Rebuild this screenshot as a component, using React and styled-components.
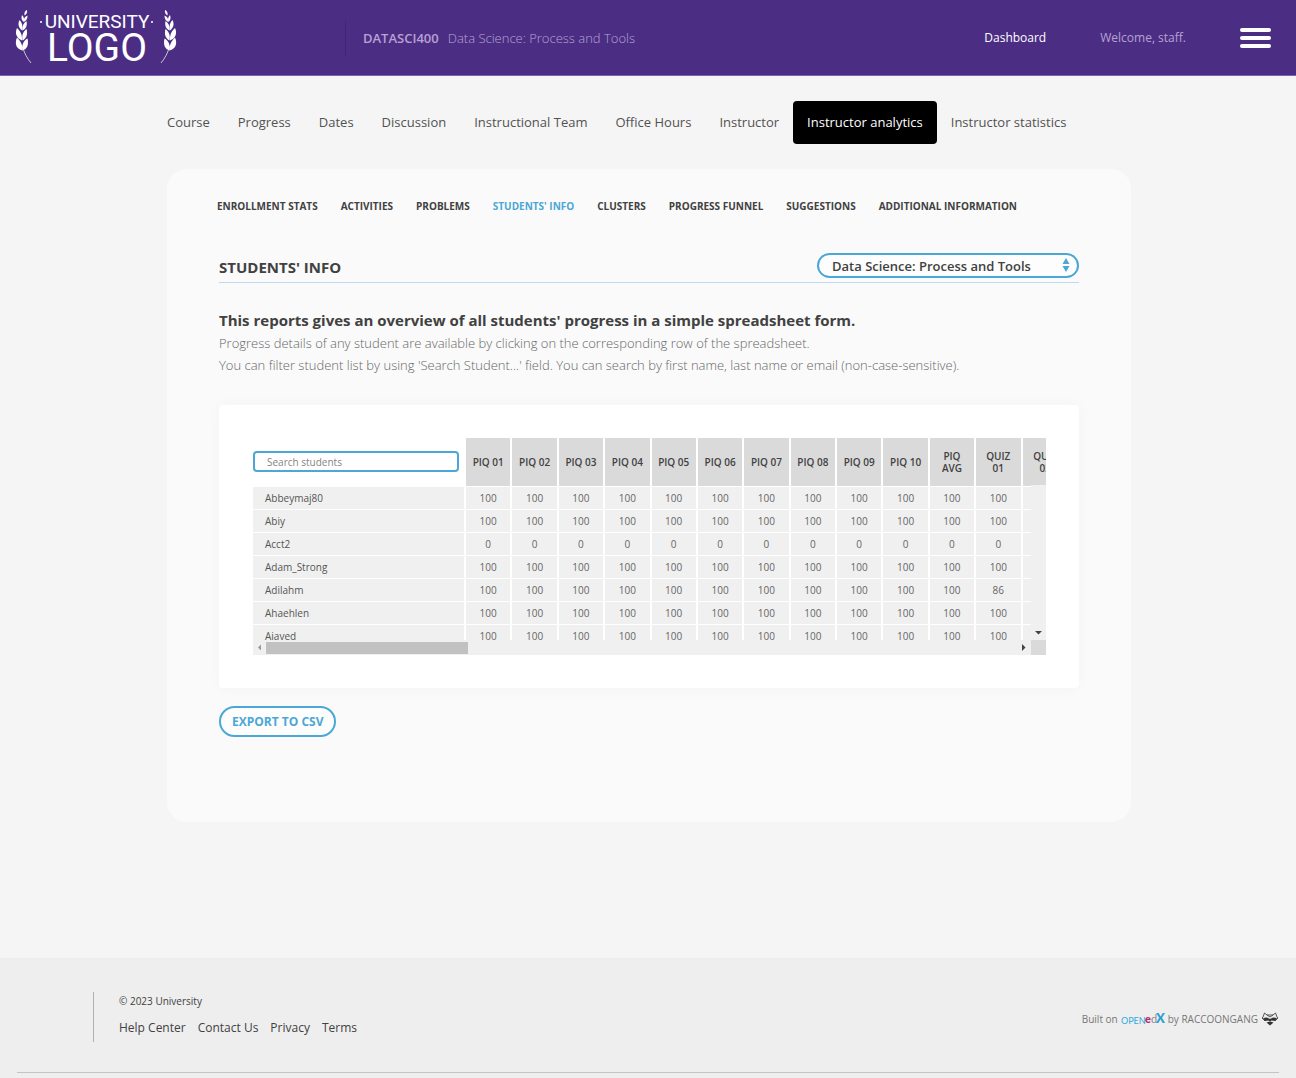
import React, { useState } from "react";
import styled, { createGlobalStyle } from "styled-components";

const GlobalStyle = createGlobalStyle`
  *, *::before, *::after {
    box-sizing: border-box;
  }

  body {
    margin: 0;
    background: #f5f5f5;
    color: #414141;
    font-family: "Open Sans", "Noto Sans", sans-serif;
  }

  a {
    color: inherit;
    text-decoration: none;
  }

  button, input, select {
    font-family: inherit;
  }
`;

const Page = styled.div`
  display: flex;
  flex-direction: column;
  min-height: 100vh;
`;

const Header = styled.header`
  display: flex;
  align-items: center;
  height: 76px;
  padding: 0 25px 0 15px;
  background: #4b2e83;
  border-bottom: 1px solid #7f62ab;
  color: #b7a1d4;
`;

const Brand = styled.a`
  flex: 0 0 330px;
  height: 56px;
`;

const CourseTitle = styled.div`
  display: flex;
  align-items: center;
  gap: 9px;
  height: 36px;
  padding-left: 17px;
  border-left: 1px solid #432577;
  font-size: 13px;
  font-weight: 300;
  line-height: 20px;
  white-space: nowrap;
`;

const CourseCode = styled.span`
  font-weight: 600;
`;

const UserNav = styled.nav`
  display: flex;
  align-items: center;
  gap: 54px;
  margin-left: auto;
  font-size: 12px;
  white-space: nowrap;
`;

const DashboardLink = styled.a`
  color: #fff;
`;

const MenuButton = styled.button`
  display: flex;
  flex-direction: column;
  gap: 4px;
  width: 31px;
  padding: 0;
  border: 0;
  background: none;
  cursor: pointer;
`;

const MenuBar = styled.span`
  height: 4px;
  border-radius: 2px;
  background: #fff;
`;

const Content = styled.main`
  width: 100%;
  max-width: 990px;
  margin: 0 auto;
  padding: 25px 12px 136px 14px;
`;

const Tabs = styled.nav`
  display: flex;
  margin: 0 -14px 25px;
`;

const Tab = styled.a`
  padding: 0 14px;
  border-radius: 4px;
  background: ${props => props["aria-current"] ? "#000" : "transparent"};
  color: ${props => props["aria-current"] ? "#fff" : "#525252"};
  font-size: 13px;
  line-height: 43px;
  white-space: nowrap;
`;

const Card = styled.section`
  min-height: 653px;
  padding: 28px 52px;
  border-radius: 20px;
  background: #fafafa;
`;

const SubTabs = styled.nav`
  display: flex;
  gap: 23px;
  margin-left: -2px;
  font-size: 10px;
  font-weight: 700;
  line-height: 18px;
  text-transform: uppercase;
  white-space: nowrap;
`;

const SubTab = styled.a`
  color: ${props => props["aria-current"] ? "#4ba7d5" : "#414141"};
`;

const SectionHead = styled.div`
  display: flex;
  justify-content: space-between;
  align-items: flex-start;
  height: 31px;
  margin-top: 37px;
  border-bottom: 1px solid #bfdaf0;
`;

const SectionTitle = styled.h2`
  margin: 4px 0 0;
  font-size: 15px;
  font-weight: 700;
  line-height: 22px;
  text-transform: uppercase;
`;

const SelectWrap = styled.div`
  position: relative;
  margin-top: 1px;
`;

const CourseSelect = styled.select`
  display: block;
  appearance: none;
  width: 262px;
  height: 25px;
  padding: 0 32px 0 13px;
  border: 2px solid #4ba7d5;
  border-radius: 13px;
  background: #fdfdfd;
  color: #414141;
  font-size: 13px;
  font-weight: 600;
`;

const SelectArrows = styled.svg`
  position: absolute;
  top: 4px;
  right: 9px;
  pointer-events: none;
`;

const Lead = styled.h3`
  margin: 26px 0 0;
  font-size: 15px;
  font-weight: 700;
  line-height: 22px;
`;

const Description = styled.p`
  margin: 1px 0 0;
  color: #666;
  font-size: 13px;
  font-weight: 300;
  line-height: 22px;
`;

const Panel = styled.div`
  margin-top: 29px;
  padding: 33px 33px 33px 34px;
  border-radius: 4px;
  background: #fff;
  box-shadow: 0 0 14px rgba(0, 0, 0, 0.03);
`;

const Sheet = styled.div`
  position: relative;
  overflow: hidden;
`;

const SheetView = styled.div`
  height: 202px;
  overflow: hidden;
`;

const Table = styled.table`
  width: 815px;
  border-collapse: collapse;
  table-layout: fixed;
  font-size: 10px;
`;

const SearchCell = styled.th`
  width: 212px;
  height: 48px;
  padding: 0 5px 0 0;
`;

const SearchInput = styled.input`
  display: block;
  width: 100%;
  height: 21px;
  padding: 0 12px;
  border: 2px solid #4ba7d5;
  border-radius: 4px;
  color: #414141;
  font-size: 10px;

  &::placeholder {
    color: #858585;
  }
`;

const HeadCell = styled.th`
  height: 48px;
  padding: 0 4px;
  border-left: 2px solid #fff;
  border-bottom: 1px solid #fff;
  background: #dadada;
  font-weight: 600;
  line-height: 12px;
`;

const NameCell = styled.th`
  height: 23px;
  padding: 0 12px;
  border-top: 1px solid #fff;
  background: #f0f0f0;
  color: #555;
  font-weight: 400;
  line-height: 14px;
  text-align: left;
`;

const ScoreCell = styled.td`
  height: 23px;
  padding: 0;
  border-left: 2px solid #fff;
  border-top: 1px solid #fff;
  background: #f0f0f0;
  color: #666;
  line-height: 14px;
  text-align: center;
`;

const VerticalBar = styled.div`
  position: absolute;
  top: 47px;
  right: 0;
  bottom: 15px;
  display: flex;
  align-items: flex-end;
  width: 15px;
  background: #f0f0f0;
`;

const HorizontalBar = styled.div`
  display: flex;
  align-items: center;
  height: 15px;
  background: #f0f0f0;
`;

const Thumb = styled.div`
  width: 202px;
  height: 12px;
  margin-right: auto;
  background: #c1c1c1;
`;

const Corner = styled.div`
  width: 15px;
  height: 15px;
  background: #dadada;
`;

const ArrowButton = styled.button`
  display: flex;
  align-items: center;
  justify-content: center;
  width: ${props => props.$narrow ? "13px" : "15px"};
  height: 15px;
  padding: 0;
  border: 0;
  background: none;
`;

const ExportButton = styled.button`
  height: 31px;
  margin-top: 18px;
  padding: 0 11px;
  border: 2px solid #4ba7d5;
  border-radius: 16px;
  background: #fdfdfd;
  color: #4ba7d5;
  font-size: 12px;
  font-weight: 700;
  text-transform: uppercase;
  cursor: pointer;
`;

const Footer = styled.footer`
  padding: 34px 17px 5px;
  background: #eee;
`;

const FooterRow = styled.div`
  display: flex;
  justify-content: space-between;
  align-items: center;
  padding-bottom: 30px;
  border-bottom: 1px solid #c4c4c4;
`;

const FooterInfo = styled.div`
  height: 50px;
  margin-left: 76px;
  padding-left: 25px;
  border-left: 1px solid #b0b0b0;
`;

const Copyright = styled.p`
  margin: 0;
  font-size: 10px;
  line-height: 18px;
`;

const FooterLinks = styled.nav`
  display: flex;
  gap: 12px;
  margin-top: 7px;
  font-size: 12px;
  line-height: 22px;
`;

const Credits = styled.div`
  display: flex;
  align-items: center;
  gap: 3px;
  padding-top: 3px;
  color: #777;
  font-size: 10px;
  line-height: 16px;
`;

const TABS = [
  "Course",
  "Progress",
  "Dates",
  "Discussion",
  "Instructional Team",
  "Office Hours",
  "Instructor",
  "Instructor analytics",
  "Instructor statistics",
];

const SUB_TABS = [
  "Enrollment stats",
  "Activities",
  "Problems",
  "Students' info",
  "Clusters",
  "Progress funnel",
  "Suggestions",
  "Additional information",
];

const COLUMNS = [
  "PIQ 01", "PIQ 02", "PIQ 03", "PIQ 04", "PIQ 05", "PIQ 06", "PIQ 07",
  "PIQ 08", "PIQ 09", "PIQ 10", "PIQ AVG", "QUIZ 01", "QUIZ 02",
];

const fill = (score, last = score) => [...Array(11).fill(score), last, ""];

const STUDENTS = [
  { name: "Abbeymaj80", scores: fill(100) },
  { name: "Abiy", scores: fill(100) },
  { name: "Acct2", scores: fill(0) },
  { name: "Adam_Strong", scores: fill(100) },
  { name: "Adilahm", scores: fill(100, 86) },
  { name: "Ahaehlen", scores: fill(100) },
  { name: "Ajaved", scores: fill(100) },
];

const Laurel = ({ transform }) => (
  <g transform={transform} fill="#fff">
    <path d="M31 63C27 58 24 53 22.500 46" fill="none" stroke="#fff" strokeWidth="0.7" />
    <path d="M22.500 50.500C16 49 14.500 43 17 37.500C20.500 41 23 45 22.500 50.500Z" />
    <path d="M22.500 50.500C21.500 45 23.500 40.500 27.500 38.500C29 45 27 49 22.500 50.500Z" />
    <path d="M22 40.500C16.500 38.500 14.500 33 17 28C20.500 31 22.500 35 22 40.500Z" />
    <path d="M22.500 40.500C21.500 35.500 23 31.500 26.500 29C28 34 26.500 38.500 22.500 40.500Z" />
    <path d="M22.500 30.500C18.500 28.500 17.500 24 19.500 20C22 22.500 23 26 22.500 30.500Z" />
    <path d="M22.500 30.500C22 26 23.500 23 26.500 21C27.500 25.500 26 29 22.500 30.500Z" />
    <path d="M23.500 22C21.500 20 21 18 22 15C24 17 24.500 19 23.500 22Z" />
    <path d="M23.500 22C23.500 18.500 25 16.500 27.500 15.500C27.500 18.500 26.500 21 23.500 22Z" />
    <path d="M24.500 15.500C24 12.500 25 11 27 10C27.500 12.500 26.500 14.500 24.500 15.500Z" />
  </g>
);

const Logo = () => (
  <svg width="164" height="56" viewBox="15 10 164 56" role="img" aria-label="University Logo">
    <Laurel />
    <Laurel transform="translate(192 0) scale(-1 1)" />
    <g fill="#fff" fontFamily="Roboto, sans-serif" textAnchor="middle">
      <text x="97" y="28" fontSize="19">UNIVERSITY</text>
      <text x="97" y="61" fontSize="39">LOGO</text>
    </g>
    <circle cx="41" cy="22" r="1" fill="#fff" />
    <circle cx="152" cy="22" r="1" fill="#fff" />
  </svg>
);

const OpenEdx = () => (
  <svg width="44" height="12" viewBox="0 0 44 12" role="img" aria-label="Open edX">
    <g fontFamily="Lato, sans-serif">
      <text x="0" y="11" fontSize="9" fill="#2fabe0">OPEN</text>
      <text x="24" y="10" fontSize="11" fontWeight="900" fill="#b5276f">e</text>
      <text x="30" y="10" fontSize="11" fill="#8d8d8d">d</text>
      <text x="35" y="10" fontSize="13" fontWeight="900" fill="#2a9fcd">X</text>
    </g>
  </svg>
);

const Raccoon = () => (
  <svg width="18" height="14" viewBox="0 0 18 14" aria-hidden="true">
    <path d="M2 5L3.500 1L6 3H12L14.500 1L16 5" fill="none" stroke="#444" strokeWidth="0.9" />
    <path d="M6 3L9 5L12 3M2 5L1 6L4 9M16 5L17 6L14 9" fill="none" stroke="#444" strokeWidth="0.9" />
    <path d="M2 6L6 5.500L9 7L12 5.500L16 6L14 9L10.500 8.500L9 9.500L7.500 8.500L4 9Z" fill="#333" />
    <path d="M5.500 10.500L9 9.500L12.500 10.500L9 13.500Z" fill="#333" />
  </svg>
);

const Arrow = ({ points, color = "#444" }) => (
  <svg width="7" height="7" viewBox="0 0 7 7" aria-hidden="true">
    <polygon points={points} fill={color} />
  </svg>
);

const App = () => {
  const [query, setQuery] = useState("");
  const students = STUDENTS.filter(({ name }) =>
    name.toLowerCase().includes(query.toLowerCase())
  );

  return (
    <Page>
      <GlobalStyle />
      <Header>
        <Brand href="#">
          <Logo />
        </Brand>
        <CourseTitle>
          <CourseCode>DATASCI400</CourseCode>
          <span>Data Science: Process and Tools</span>
        </CourseTitle>
        <UserNav>
          <DashboardLink href="#">Dashboard</DashboardLink>
          <span>Welcome, staff.</span>
          <MenuButton type="button" aria-label="Menu">
            <MenuBar />
            <MenuBar />
            <MenuBar />
          </MenuButton>
        </UserNav>
      </Header>

      <Content>
        <Tabs aria-label="Course">
          {TABS.map(tab => (
            <Tab key={tab} href="#" aria-current={tab === "Instructor analytics" ? "page" : undefined}>
              {tab}
            </Tab>
          ))}
        </Tabs>

        <Card>
          <SubTabs aria-label="Analytics">
            {SUB_TABS.map(tab => (
              <SubTab key={tab} href="#" aria-current={tab === "Students' info" ? "page" : undefined}>
                {tab}
              </SubTab>
            ))}
          </SubTabs>

          <SectionHead>
            <SectionTitle>Students' info</SectionTitle>
            <SelectWrap>
              <CourseSelect aria-label="Course">
                <option>Data Science: Process and Tools</option>
              </CourseSelect>
              <SelectArrows width="8" height="16" viewBox="0 0 8 16" aria-hidden="true">
                <path d="M4 1L7.500 7H0.500Z M4 15L7.500 9H0.500Z" fill="#4ba7d5" />
              </SelectArrows>
            </SelectWrap>
          </SectionHead>

          <Lead>This reports gives an overview of all students' progress in a simple spreadsheet form.</Lead>
          <Description>
            Progress details of any student are available by clicking on the corresponding row of the spreadsheet.
            <br />
            You can filter student list by using 'Search Student...' field. You can search by first name, last name or email (non-case-sensitive).
          </Description>

          <Panel>
            <Sheet>
              <SheetView>
                <Table>
                  <thead>
                    <tr>
                      <SearchCell>
                        <SearchInput
                          type="text"
                          aria-label="Search students"
                          placeholder="Search students"
                          value={query}
                          onChange={e => setQuery(e.target.value)}
                        />
                      </SearchCell>
                      {COLUMNS.map(column => (
                        <HeadCell key={column} scope="col">{column}</HeadCell>
                      ))}
                    </tr>
                  </thead>
                  <tbody>
                    {students.map(({ name, scores }) => (
                      <tr key={name}>
                        <NameCell scope="row">{name}</NameCell>
                        {scores.map((score, i) => (
                          <ScoreCell key={COLUMNS[i]}>{score}</ScoreCell>
                        ))}
                      </tr>
                    ))}
                  </tbody>
                </Table>
              </SheetView>
              <VerticalBar>
                <ArrowButton type="button" aria-label="Scroll down">
                  <Arrow points="0,2 7,2 3.5,5.5" />
                </ArrowButton>
              </VerticalBar>
              <HorizontalBar>
                <ArrowButton type="button" aria-label="Scroll left" $narrow>
                  <Arrow points="5,0.500 5,6.500 2,3.500" color="#999" />
                </ArrowButton>
                <Thumb />
                <ArrowButton type="button" aria-label="Scroll right">
                  <Arrow points="2,0 2,7 5.500,3.500" />
                </ArrowButton>
                <Corner />
              </HorizontalBar>
            </Sheet>
          </Panel>

          <ExportButton type="button">Export to CSV</ExportButton>
        </Card>
      </Content>

      <Footer>
        <FooterRow>
          <FooterInfo>
            <Copyright>© 2023 University</Copyright>
            <FooterLinks aria-label="Footer">
              <a href="#">Help Center</a>
              <a href="#">Contact Us</a>
              <a href="#">Privacy</a>
              <a href="#">Terms</a>
            </FooterLinks>
          </FooterInfo>
          <Credits>
            <span>Built on</span>
            <OpenEdx />
            <span>by RACCOONGANG</span>
            <Raccoon />
          </Credits>
        </FooterRow>
      </Footer>
    </Page>
  );
};

export default App;
